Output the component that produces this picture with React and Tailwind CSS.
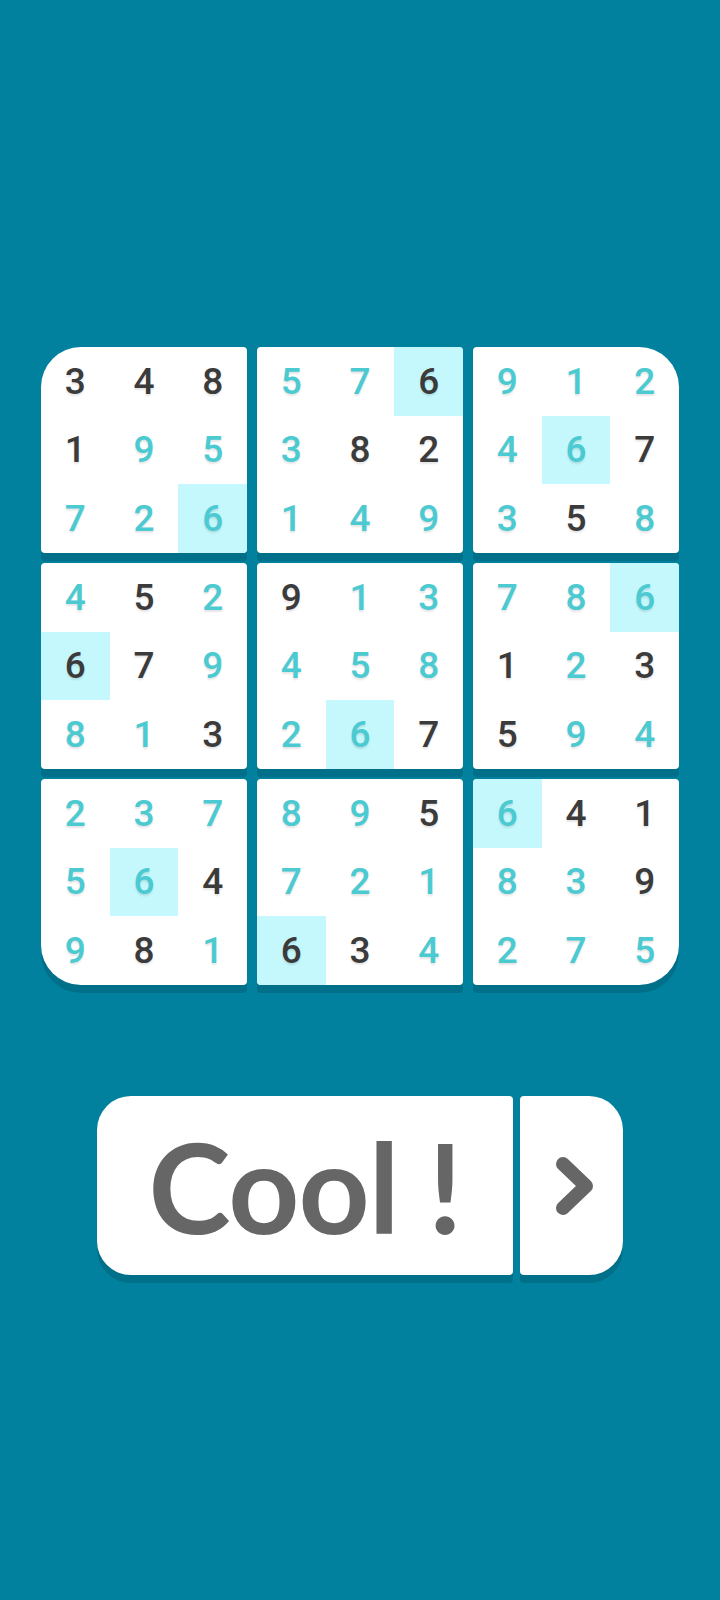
import React from 'react';

// each block: [digit, dark?, highlighted?]
const blocks = [
  [[3, 1], [4, 1], [8, 1], [1, 1], [9], [5], [7], [2], [6, 0, 1]],
  [[5], [7], [6, 1, 1], [3], [8, 1], [2, 1], [1], [4], [9]],
  [[9], [1], [2], [4], [6, 0, 1], [7, 1], [3], [5, 1], [8]],
  [[4], [5, 1], [2], [6, 1, 1], [7, 1], [9], [8], [1], [3, 1]],
  [[9, 1], [1], [3], [4], [5], [8], [2], [6, 0, 1], [7, 1]],
  [[7], [8], [6, 0, 1], [1, 1], [2], [3, 1], [5, 1], [9], [4]],
  [[2], [3], [7], [5], [6, 0, 1], [4, 1], [9], [8, 1], [1]],
  [[8], [9], [5, 1], [7], [2], [1], [6, 1, 1], [3, 1], [4]],
  [[6, 0, 1], [4, 1], [1, 1], [8], [3], [9, 1], [2], [7], [5]],
];

const cornerClass = [
  'rounded-[4px] rounded-tl-[40px]',
  'rounded-[4px]',
  'rounded-[4px] rounded-tr-[40px]',
  'rounded-[4px]',
  'rounded-[4px]',
  'rounded-[4px]',
  'rounded-[4px] rounded-bl-[40px]',
  'rounded-[4px]',
  'rounded-[4px] rounded-br-[40px]',
];

const Block = ({ cells, corner }) => (
  <div className={`grid grid-cols-3 grid-rows-3 w-[206px] h-[206px] bg-white overflow-hidden shadow-[0_8px_0_#00708a] ${corner}`}>
    {cells.map(([n, dark, hl], i) => (
      <div
        key={i}
        className={`flex items-center justify-center text-[37px] font-medium leading-none [text-shadow:0_2px_2px_rgba(0,0,0,0.1)] ${
          hl ? 'bg-[#c4f8fc]' : ''
        } ${dark ? 'text-[#3b3b3b]' : 'text-[#4ccad1]'}`}
      >
        {n}
      </div>
    ))}
  </div>
);

const App = () => {
  return (
    <div className="w-[720px] h-[1600px] bg-[#01819d] flex flex-col items-center pt-[347px] font-['Roboto',sans-serif]">
      {/* Board */}
      <div className="grid grid-cols-3 gap-[10px]">
        {blocks.map((cells, i) => (
          <Block key={i} cells={cells} corner={cornerClass[i]} />
        ))}
      </div>

      {/* Button */}
      <div className="flex gap-[7px] mt-[111px]">
        <button className="w-[416px] h-[179px] bg-white rounded-[4px] rounded-l-[34px] shadow-[0_8px_0_#00708a] flex items-center justify-center">
          <span className="font-['Lato',sans-serif] font-bold text-[124px] leading-none text-[#666666] tracking-[-1px]">
            Cool !
          </span>
        </button>
        <button className="w-[103px] h-[179px] bg-white rounded-[4px] rounded-r-[34px] shadow-[0_8px_0_#00708a] flex items-center justify-center">
          <svg width="40" height="60" viewBox="0 0 40 60" className="ml-[4px]">
            <path
              d="M9 8 L32 30 L9 52"
              fill="none"
              stroke="#666666"
              strokeWidth="14"
              strokeLinecap="round"
              strokeLinejoin="round"
            />
          </svg>
        </button>
      </div>
    </div>
  );
};

export default App;
